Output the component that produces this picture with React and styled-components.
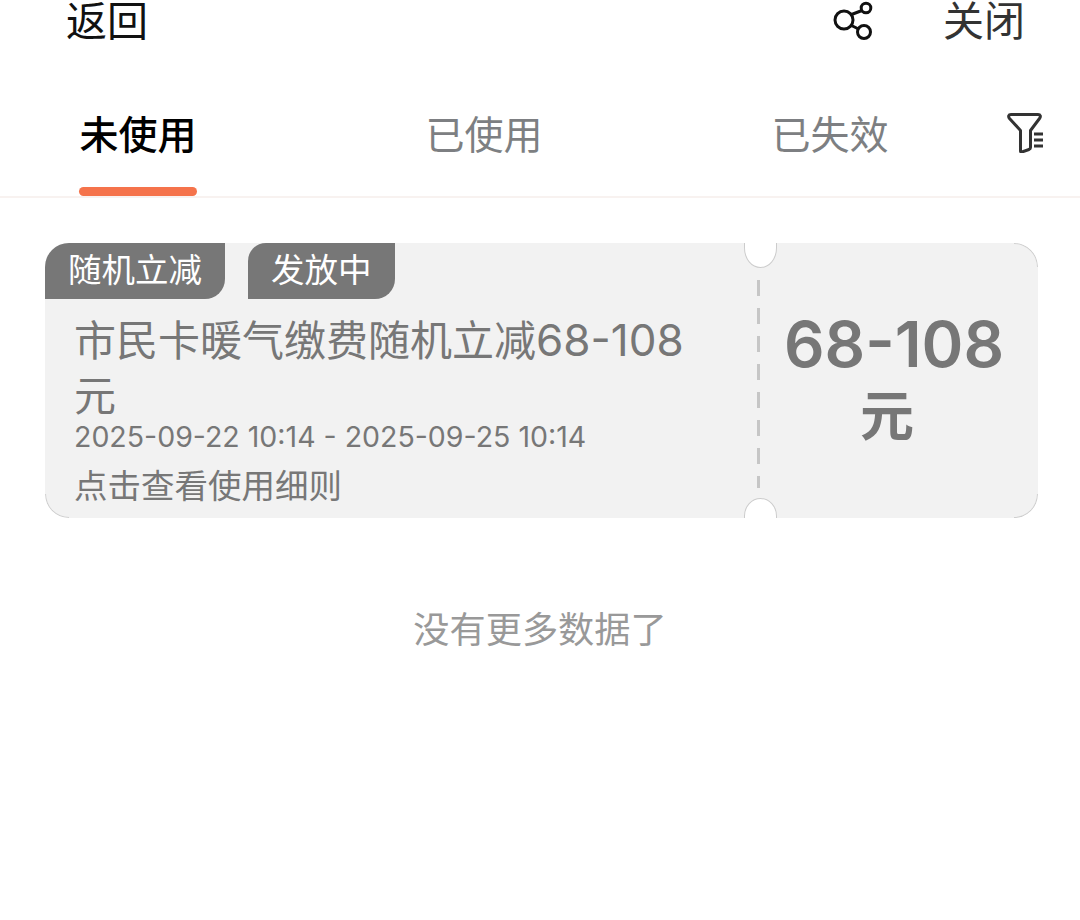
import React from "react";
import styled, { createGlobalStyle } from "styled-components";

const Global = createGlobalStyle`
  html, body { margin: 0; padding: 0; background: #fff; }
  body { font-family: Inter, "Noto Sans CJK SC", "Noto Sans", sans-serif; }
  * { box-sizing: border-box; }
`;
const Page = styled.div`width: 1080px; height: 920px; overflow: hidden; background: #fff;`;
const Header = styled.header`
  display: flex; align-items: flex-start; height: 42px; padding: 0 55px 0 66px;
  font-size: 41px; line-height: 42px; color: #333;
`;
const Back = styled.span`flex: 1; color: #111;`;
const ShareIcon = styled.svg`width: 44px; height: 42px; margin-right: 66px; display: block;`;
const Tabs = styled.nav`
  display: flex; align-items: flex-end; height: 156px; padding-left: 79px;
  border-bottom: 2px solid #f8f2f0;
`;
const Tab = styled.div`
  width: 118px; margin-right: 228px; display: flex; flex-direction: column; align-items: center;
`;
const TabLabel = styled.span`
  font-size: 39px; line-height: 50px; white-space: nowrap;
  color: ${(p) => (p.$active ? "#000" : "#7d7f82")};
  font-weight: ${(p) => (p.$active ? 500 : 400)};
`;
const TabBar = styled.span`
  display: block; width: 118px; height: 9px; margin-top: 27px; border-radius: 5px;
  background: ${(p) => (p.$active ? "#f5734b" : "transparent")};
`;
const FilterIcon = styled.svg`
  width: 40px; height: 42px; display: block; margin: 0 0 43px -111px; flex: none;
`;
const Card = styled.section`
  position: relative; display: flex; margin: 45px 42px 0 45px; height: 275px;
  background: #f2f2f2; border-radius: 24px; overflow: hidden; color: #777;
`;
const Left = styled.div`width: 714px; flex: none;`;
const TagRow = styled.div`display: flex; gap: 23px;`;
const Tag = styled.span`
  height: 56px; padding: 0 23px; background: #777; color: #fff;
  font-size: 33.5px; line-height: 54px; border-radius: 18px 0 20px 0; white-space: nowrap;
`;
const Body = styled.div`padding: 14px 0 0 29px;`;
const Title = styled.h2`
  margin: 0; font-size: 42px; font-weight: 400; line-height: 55px; color: #777; width: 630px;
`;
const TitleDigits = styled.span`font-size: 44px;`;
const DateLine = styled.div`font-size: 28.5px; line-height: 36px; margin-top: -4px; white-space: nowrap;`;
const Detail = styled.div`font-size: 33.5px; line-height: 48px; margin-top: 7px;`;
const Right = styled.div`
  flex: 1; display: flex; flex-direction: column; align-items: center; padding: 60px 0 0 0;
`;
const Amount = styled.div`font-size: 63.5px; line-height: 82px; font-weight: 600; color: #777; margin-left: -9px; white-space: nowrap;`;
const Unit = styled.div`font-size: 54px; line-height: 64px; font-weight: 700; color: #777; margin: 0 0 0 -23px;`;
const Dash = styled.div`
  position: absolute; left: 712px; top: 37px; height: 208px; width: 3px;
  background: repeating-linear-gradient(to bottom, #c6c6c6 0 16px, transparent 16px 28px);
`;
const Notch = styled.span`
  position: absolute; left: 699px; width: 33px; background: #fff; border: 1px solid #ccc;
  ${(p) => p.$top
    ? "top: -1px; height: 26px; border-radius: 0 0 16.5px 16.5px / 0 0 20px 20px;"
    : "bottom: -1px; height: 21px; border-radius: 16.5px 16.5px 0 0 / 18px 18px 0 0;"}
`;
const Corner = styled.span`
  position: absolute; width: 24px; height: 24px; border: 0 solid #cfcfcf;
  ${(p) => (p.$v === "top" ? "top: 0; border-top-width: 1px;" : "bottom: 0; border-bottom-width: 1px;")}
  ${(p) => (p.$h === "left" ? "left: 0; border-left-width: 1px;" : "right: 0; border-right-width: 1px;")}
  border-${(p) => p.$v}-${(p) => p.$h}-radius: 24px;
`;
const Empty = styled.div`
  margin-top: 88px; text-align: center; font-size: 36.2px; line-height: 48px; color: #999;
`;

export default function App() {
  return (
    <Page>
      <Global />
      <Header>
        <Back>返回</Back>
        <ShareIcon viewBox="0 0 44 42" fill="none" stroke="#111" strokeWidth="3">
          <circle cx="11" cy="20" r="9" />
          <circle cx="33" cy="8" r="4.8" />
          <circle cx="31" cy="32" r="6.5" />
          <path d="M18.500 14.500 29 10.500M18.500 25.500l7 3.500" />
        </ShareIcon>
        <span>关闭</span>
      </Header>
      <Tabs>
        <Tab><TabLabel $active>未使用</TabLabel><TabBar $active /></Tab>
        <Tab><TabLabel>已使用</TabLabel><TabBar /></Tab>
        <Tab><TabLabel>已失效</TabLabel><TabBar /></Tab>
        <FilterIcon viewBox="0 0 40 42" fill="none" stroke="#333" strokeWidth="3">
          <path d="M5 3.500h27c2.500 0 3 2 1.500 4L24.500 19.500v17c0 1-.5 1.500-1.500 2L16 41c-.8.200-1.500 0-1.500-1V19.500L3.500 7.500C2 5.500 2.500 3.500 5 3.500Z" strokeLinejoin="round" />
          <path d="M28 23h9M28 29h9M28 35h9" />
        </FilterIcon>
      </Tabs>
      <Card>
        <Left>
          <TagRow>
            <Tag>随机立减</Tag>
            <Tag>发放中</Tag>
          </TagRow>
          <Body>
            <Title>市民卡暖气缴费随机立减<TitleDigits>68-108</TitleDigits>元</Title>
            <DateLine>2025-09-22 10:14 - 2025-09-25 10:14</DateLine>
            <Detail>点击查看使用细则</Detail>
          </Body>
        </Left>
        <Right>
          <Amount>68-108</Amount>
          <Unit>元</Unit>
        </Right>
        <Dash />
        <Notch $top />
        <Notch />
        <Corner $v="top" $h="right" />
        <Corner $v="bottom" $h="right" />
        <Corner $v="bottom" $h="left" />
      </Card>
      <Empty>没有更多数据了</Empty>
    </Page>
  );
}
